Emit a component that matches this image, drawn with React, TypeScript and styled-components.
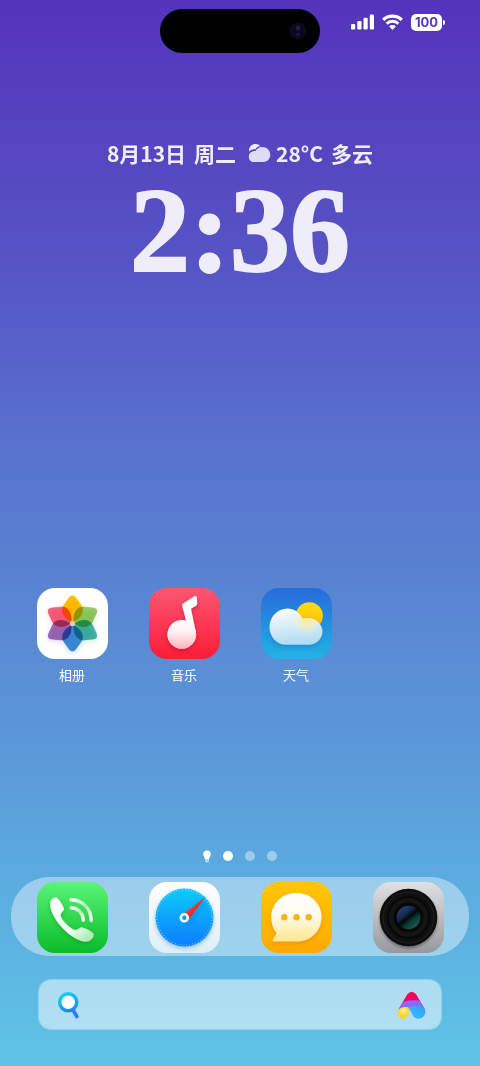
import React from "react";
import styled, { createGlobalStyle } from "styled-components";

const GlobalStyle = createGlobalStyle`
  * { box-sizing: border-box; }
  body {
    margin: 0;
    font-family: "Noto Sans", "Noto Sans CJK SC", sans-serif;
    color: #fff;
  }
`;

const Screen = styled.main`
  min-height: 100vh;
  display: flex;
  flex-direction: column;
  background: linear-gradient(
    180deg,
    #5433bb 0%,
    #5646c0 14%,
    #5659c7 28%,
    #5872ce 42%,
    #5985d2 56%,
    #5b98d9 70%,
    #5ba9df 81%,
    #5fc4e6 100%
  );
`;

const StatusBar = styled.header`
  display: grid;
  grid-template-columns: 1fr 160px 1fr;
  padding-top: 9px;
`;

const Island = styled.div`
  grid-column: 2;
  height: 44px;
  border-radius: 22px;
  background: #000;
  display: flex;
  align-items: center;
  justify-content: flex-end;
  padding-right: 13px;
`;

const StatusIcons = styled.div`
  display: flex;
  align-items: center;
  justify-content: flex-end;
  gap: 8px;
  height: 18px;
  margin-top: 4px;
  padding-right: 35px;
`;

const Battery = styled.div`
  display: flex;
  align-items: center;
  gap: 1px;
`;

const BatteryLevel = styled.span`
  width: 31px;
  height: 17px;
  border-radius: 5px;
  background: #fff;
  color: #5535b8;
  font: 700 13px/17px Inter, sans-serif;
  text-align: center;
`;

const BatteryCap = styled.span`
  width: 2px;
  height: 5px;
  border-radius: 0 2px 2px 0;
  background: #fff;
`;

const ClockWidget = styled.section`
  display: flex;
  flex-direction: column;
  align-items: center;
  margin-top: 84px;
  color: #efedf9;
`;

const DateLine = styled.div`
  display: flex;
  align-items: center;
  gap: 12px;
  font: 700 21px/32px "Noto Sans CJK SC", sans-serif;
`;

const DateGroup = styled.div`
  display: flex;
  gap: 8px;
`;

const WeatherGroup = styled.div`
  display: flex;
  align-items: center;
  gap: 5px;
`;

const Time = styled.time`
  margin-top: 14px;
  font: 700 120px/96px "Liberation Serif", serif;
  -webkit-text-stroke: 2px #efedf9;
`;

const Apps = styled.nav`
  display: grid;
  grid-template-columns: repeat(4, 1fr);
  margin-top: auto;
  padding: 0 16px;
`;

const AppLink = styled.a`
  display: flex;
  flex-direction: column;
  align-items: center;
  color: #fff;
  text-decoration: none;
`;

const Tile = styled.span<{ $fill: string }>`
  display: block;
  width: 71px;
  height: 71px;
  border-radius: 18px;
  overflow: hidden;
  background: ${(p) => p.$fill};

  svg { display: block; }
`;

const AppLabel = styled.span`
  margin-top: 6px;
  font: 400 13px/20px "Noto Sans CJK SC", sans-serif;
`;

const Pager = styled.div`
  display: flex;
  align-items: center;
  justify-content: center;
  gap: 12px;
  height: 14px;
  margin-top: 164px;
`;

const PageDot = styled.button<{ $active?: boolean }>`
  width: 10px;
  height: 10px;
  padding: 0;
  border: 0;
  border-radius: 50%;
  background: ${(p) => (p.$active ? "#fff" : "rgba(255, 255, 255, 0.4)")};
`;

const Dock = styled.nav`
  display: grid;
  grid-template-columns: repeat(4, 1fr);
  margin: 14px 11px 0;
  padding: 5px 5px 3px;
  border-radius: 38px;
  background: rgba(255, 255, 255, 0.4);
`;

const SearchBar = styled.form`
  display: flex;
  align-items: center;
  height: 51px;
  margin: 23px 38px 36px;
  padding: 0 15px 0 17px;
  border: 1px solid rgba(255, 255, 255, 0.3);
  border-radius: 13px;
  background: rgba(255, 255, 255, 0.5);
  background-clip: padding-box;
`;

const SearchInput = styled.input`
  flex: 1;
  min-width: 0;
  border: 0;
  outline: 0;
  background: transparent;
  font: 400 16px/24px "Noto Sans CJK SC", sans-serif;
`;

const IconButton = styled.button`
  display: flex;
  padding: 0;
  border: 0;
  background: transparent;
`;

const CameraSensor = () => (
  <svg width="18" height="18" viewBox="0 0 18 18" aria-hidden="true">
    <circle cx="9" cy="9" r="8.5" fill="#0a0a1c" />
    <circle cx="9" cy="9" r="6" fill="#080822" />
    <circle cx="9" cy="6" r="2.4" fill="#1f1f42" />
    <circle cx="9" cy="12.5" r="2" fill="#19193c" />
  </svg>
);

const SignalIcon = () => (
  <svg width="23" height="16" viewBox="0 0 23 16" fill="#fff" aria-hidden="true">
    <rect x="0" y="10" width="4.2" height="5.5" rx="1.3" />
    <rect x="6.3" y="7" width="4.2" height="8.5" rx="1.3" />
    <rect x="12.5" y="3.8" width="4.2" height="11.7" rx="1.3" />
    <rect x="18.8" y="0.6" width="4.2" height="14.9" rx="1.3" />
  </svg>
);

const WifiIcon = () => (
  <svg width="21" height="16" viewBox="0 0 21 16" aria-hidden="true">
    <path d="M1.2 5.8C6.4.9 14.6.9 19.8 5.8" fill="none" stroke="#fff" strokeWidth="3.2" />
    <path d="M4.6 9.6C8 6.5 13 6.5 16.4 9.6" fill="none" stroke="#fff" strokeWidth="2.9" />
    <path d="M7.2 12.4C9 10.6 12 10.6 13.8 12.4L10.5 15.9Z" fill="#fff" />
  </svg>
);

const CloudyIcon = () => (
  <svg width="23" height="20" viewBox="0 0 23 20" aria-hidden="true">
    <path
      d="M1.2 8.5C.3 4.5 3.5 1 7.5 1c2 0 3.6.8 4.8 2-2.200.3-4 1.500-5 3.400-2.300-.3-4.600.4-6.100 2.100Z"
      fill="#efedf9"
    />
    <path
      d="M6 19C2.800 19 .8 16.700.8 13.700.8 10.300 3.600 7.900 7.400 8.100 8.600 5.500 11 3.900 14 3.900c4.800 0 8.300 3.500 8.300 7.700 0 4.200-2.900 7.400-6.800 7.400Z"
      fill="#dedcf4"
    />
  </svg>
);

const PETALS = ["#fdc400", "#9dce6c", "#4ab9ab", "#4798db", "#a374bf", "#f66a84"];

const GalleryIcon = () => (
  <svg width="71" height="71" viewBox="0 0 71 71" aria-hidden="true">
    <defs>
      <filter id="petalShade" x="-30%" y="-30%" width="160%" height="160%">
        <feGaussianBlur stdDeviation="2.5" />
      </filter>
      <path
        id="petal"
        d="M0-28C1.5-28 2.6-27 4-25.200L8.800-18.500C12.800-12.500 8.500-4.500 0-1.500C-8.500-4.500-12.800-12.500-8.800-18.500L-4-25.200C-2.600-27-1.500-28 0-28Z"
      />
    </defs>
    <g transform="translate(35.5 37)" opacity="0.3" filter="url(#petalShade)">
      {PETALS.map((c, i) => (
        <use key={c} href="#petal" fill={c} transform={`rotate(${i * 60})`} />
      ))}
    </g>
    <g transform="translate(35.5 35.5)">
      {PETALS.map((c, i) => (
        <use
          key={c}
          href="#petal"
          fill={c}
          transform={`rotate(${i * 60})`}
          style={{ mixBlendMode: "multiply" }}
        />
      ))}
    </g>
    <circle cx="35.5" cy="35.5" r="2.6" fill="#d9cfc6" />
  </svg>
);

const MusicIcon = () => (
  <svg width="71" height="71" viewBox="0 0 71 71" aria-hidden="true">
    <defs>
      <linearGradient id="headFill" x1="0" y1="0" x2="0" y2="1">
        <stop offset="0" stopColor="#fff" />
        <stop offset="0.4" stopColor="#fff1f3" />
        <stop offset="1" stopColor="#ffb3bc" />
      </linearGradient>
      <filter id="noteShade" x="-30%" y="-20%" width="160%" height="150%">
        <feDropShadow dx="0" dy="2" stdDeviation="2" floodColor="#a40020" floodOpacity="0.45" />
      </filter>
    </defs>
    <g filter="url(#noteShade)">
      <circle cx="32.8" cy="46.5" r="14.3" fill="url(#headFill)" />
      <path
        d="M34 15.500 45.500 8.300Q47.700 7.200 47.900 9.500L48.200 15.600Q48.200 17 47 17.700L42 20.800 47 45 39 40 33.200 18Q32.800 16.300 34 15.500Z"
        fill="#fff"
      />
    </g>
    <circle cx="32.8" cy="46.5" r="14.3" fill="url(#headFill)" />
  </svg>
);

const WeatherIcon = () => (
  <svg width="71" height="71" viewBox="0 0 71 71" aria-hidden="true">
    <defs>
      <linearGradient id="sunFill" x1="0" y1="0" x2="0" y2="1">
        <stop offset="0" stopColor="#ffdc16" />
        <stop offset="1" stopColor="#fdbd00" />
      </linearGradient>
      <linearGradient id="cloudFill" x1="0" y1="0" x2="0.2" y2="1">
        <stop offset="0" stopColor="#fff" />
        <stop offset="1" stopColor="#b2dcf3" />
      </linearGradient>
      <radialGradient id="cloudGlow">
        <stop offset="0" stopColor="#ffe98f" />
        <stop offset="1" stopColor="#fff4c4" stopOpacity="0" />
      </radialGradient>
      <clipPath id="cloudClip">
        <path d="M25.5 56.8C15.700 56.800 8.500 49 8.500 39.300 8.500 28.800 16.500 20.500 26.500 20.500 33 20.500 38.500 24.300 41.500 30.800 51.500 27.500 61.500 34.500 61.500 43.500 61.500 51 55 56.800 48 56.800Z" />
      </clipPath>
      <filter id="cloudShade" x="-30%" y="-30%" width="160%" height="170%">
        <feGaussianBlur stdDeviation="2.5" />
      </filter>
    </defs>
    <circle cx="48.3" cy="27.8" r="13.6" fill="url(#sunFill)" />
    <rect x="10" y="32" width="50" height="27" rx="13" fill="#1266b6" opacity="0.35" filter="url(#cloudShade)" />
    <g clipPath="url(#cloudClip)">
      <rect x="8" y="20" width="54" height="38" fill="url(#cloudFill)" />
      <circle cx="46" cy="32" r="15" fill="url(#cloudGlow)" />
    </g>
  </svg>
);

const PhoneIcon = () => (
  <svg width="71" height="71" viewBox="0 0 71 71" aria-hidden="true">
    <defs>
      <linearGradient id="handset" x1="0" y1="0" x2="1" y2="1">
        <stop offset="0" stopColor="#fff" />
        <stop offset="0.6" stopColor="#f2fdf3" />
        <stop offset="1" stopColor="#98e6a2" />
      </linearGradient>
      <linearGradient id="wave" x1="0" y1="0" x2="0.8" y2="1">
        <stop offset="0" stopColor="#fff" />
        <stop offset="0.55" stopColor="#a9efb0" />
        <stop offset="1" stopColor="#f4fff5" />
      </linearGradient>
      <filter id="handsetShade" x="-20%" y="-20%" width="150%" height="150%">
        <feDropShadow dx="0" dy="2" stdDeviation="2" floodColor="#00801c" floodOpacity="0.4" />
      </filter>
    </defs>
    <path
      filter="url(#handsetShade)"
      fill="url(#handset)"
      d="M13.2 20.5C13.500 17.300 17.700 15 19.800 15.700 21.700 16.500 26.700 24.500 27 26.500 27.300 28.500 23.800 30.800 23.500 33 23.600 37.500 33.500 47 38 48 40.500 48.500 42.500 45 45 45.300 48 45.900 55.700 50 56.700 52 57.700 54.500 54 59 50.500 59.600 44 60.600 34 55 25.500 46 17.500 37.500 12.500 27.500 13.200 20.500Z"
    />
    <g fill="none" stroke="url(#wave)" strokeWidth="3.4" strokeLinecap="round">
      <path d="M34 17.700C46 18 54 27 54.200 38.300" />
      <path d="M34.300 25.800C41.500 26.500 46.200 31.500 46.300 38.300" />
    </g>
  </svg>
);

const BrowserIcon = () => (
  <svg width="71" height="71" viewBox="0 0 71 71" aria-hidden="true">
    <defs>
      <linearGradient id="dial" x1="0" y1="0" x2="0" y2="1">
        <stop offset="0" stopColor="#07cbfa" />
        <stop offset="1" stopColor="#087cff" />
      </linearGradient>
      <filter id="dialShade" x="-20%" y="-20%" width="140%" height="150%">
        <feDropShadow dx="0" dy="2" stdDeviation="2" floodColor="#2878b8" floodOpacity="0.4" />
      </filter>
    </defs>
    <circle cx="35.5" cy="35.5" r="29" fill="url(#dial)" filter="url(#dialShade)" />
    <circle
      cx="35.5"
      cy="35.5"
      r="27.6"
      fill="none"
      stroke="#a9e8ff"
      strokeOpacity="0.65"
      strokeWidth="1.7"
      strokeDasharray="0.7 2.2"
    />
    <path d="M31 39 41 45 57 21 52 18Z" fill="#0568d8" opacity="0.18" filter="url(#dialShade)" />
    <path d="M56 15 39 38.500 33 33Z" fill="#f4382f" />
    <path d="M56 15 39 38.500 36 35.700Z" fill="#df302b" />
    <circle cx="35.3" cy="35.8" r="3.5" fill="#0a9aff" stroke="#fff" strokeWidth="2.6" />
  </svg>
);

const MessagesIcon = () => (
  <svg width="71" height="71" viewBox="0 0 71 71" aria-hidden="true">
    <defs>
      <linearGradient id="bubble" x1="0" y1="0" x2="0" y2="1">
        <stop offset="0" stopColor="#fff" />
        <stop offset="0.45" stopColor="#fffbed" />
        <stop offset="1" stopColor="#ffe58d" />
      </linearGradient>
      <filter id="bubbleShade" x="-20%" y="-20%" width="140%" height="150%">
        <feDropShadow dx="0" dy="2" stdDeviation="2" floodColor="#c77400" floodOpacity="0.4" />
      </filter>
    </defs>
    <path
      filter="url(#bubbleShade)"
      fill="url(#bubble)"
      d="M35.5 11C49.800 11 60.500 21.500 60.500 35 60.500 49 50 59.500 35.500 59.500H13.500C11.700 59.500 11.300 58.300 12.300 57L15.500 51.500C12 46.500 10.300 41 10.300 35.500 10.300 21.500 21 11 35.500 11Z"
    />
    <g fill="#f9b21a">
      <circle cx="23.3" cy="35.2" r="3.2" />
      <circle cx="35.5" cy="35.2" r="3.2" />
      <circle cx="47.7" cy="35.2" r="3.2" />
    </g>
  </svg>
);

const CameraIcon = () => (
  <svg width="71" height="71" viewBox="0 0 71 71" aria-hidden="true">
    <defs>
      <linearGradient id="lensGlass" x1="0.1" y1="0" x2="0.9" y2="1">
        <stop offset="0" stopColor="#294a86" />
        <stop offset="0.36" stopColor="#14284c" />
        <stop offset="0.5" stopColor="#020708" />
        <stop offset="0.65" stopColor="#0c3a32" />
        <stop offset="1" stopColor="#23665b" />
      </linearGradient>
      <filter id="lensShade" x="-20%" y="-20%" width="140%" height="150%">
        <feDropShadow dx="0" dy="2" stdDeviation="1.5" floodColor="#000" floodOpacity="0.35" />
      </filter>
    </defs>
    <circle cx="35.5" cy="35.5" r="28.8" fill="#090909" filter="url(#lensShade)" />
    <circle cx="35.5" cy="35.5" r="25.5" fill="#101010" stroke="#2a2a2a" strokeWidth="0.8" />
    <circle cx="35.5" cy="35.5" r="20.5" fill="#141414" stroke="#070707" strokeWidth="2" />
    <circle cx="35.5" cy="35.5" r="15" fill="#060708" />
    <circle cx="35.5" cy="35.5" r="11.8" fill="url(#lensGlass)" />
  </svg>
);

const BulbIcon = () => (
  <svg width="8" height="13" viewBox="0 0 8 13" aria-hidden="true">
    <path d="M4 .4C6.2.4 7.800 2 7.800 4.100 7.800 6.200 6.400 7 6.100 9H1.900C1.600 7 .2 6.200.2 4.100.2 2 1.800.4 4 .4Z" fill="#fff" />
    <path d="M2 9H6V11Q6 12.500 4 12.500T2 11Z" fill="#fff" opacity="0.55" />
  </svg>
);

const SearchIcon = () => (
  <svg width="24" height="30" viewBox="0 0 24 30" aria-hidden="true">
    <defs>
      <linearGradient id="ring" x1="0.3" y1="0" x2="0.7" y2="1">
        <stop offset="0" stopColor="#02d5f7" />
        <stop offset="1" stopColor="#1c86ff" />
      </linearGradient>
    </defs>
    <path d="M17 20 20.800 26.500" stroke="#2b7cf6" strokeWidth="3.6" strokeLinecap="round" />
    <circle cx="12.2" cy="12.2" r="8.5" fill="#fff" stroke="url(#ring)" strokeWidth="3.4" />
  </svg>
);

const AssistantIcon = () => (
  <svg width="30" height="30" viewBox="0 0 30 30" aria-hidden="true">
    <defs>
      <radialGradient id="goldBall" cx="0.5" cy="0.3" r="0.7">
        <stop offset="0" stopColor="#fff0a0" />
        <stop offset="0.5" stopColor="#fcdc35" />
        <stop offset="1" stopColor="#f9d01c" />
      </radialGradient>
      <linearGradient id="blueBall" x1="1" y1="0" x2="0" y2="1">
        <stop offset="0" stopColor="#2d9bfa" />
        <stop offset="1" stopColor="#3cc2fb" />
      </linearGradient>
      <clipPath id="assistantArch">
        <path d="M2.5 19.5 11.300 4.200Q15.700-.8 20.100 4.200L29 19.500 18 22 15.500 19 12 20Z" />
      </clipPath>
    </defs>
    <g clipPath="url(#assistantArch)">
      <rect width="30" height="30" fill="#f3055f" />
      <path d="M0 17.500Q8 7.500 28 11.500V30H0Z" fill="#8e68f4" />
    </g>
    <path
      d="M7.300 17.300C9.800 16.800 12.600 17.300 13.300 18.500 13.900 19.800 12.800 21.800 12.400 24 11.700 27 9.800 28.500 7.300 28.500 4 28.500 1.500 26 1.500 23 1.500 20 4 17.800 7.300 17.300Z"
      fill="url(#goldBall)"
    />
    <path
      d="M13.300 17.500C15 16 19 16.300 23 15.500 26.500 15.500 29.300 18.500 29.300 22 29.300 25.800 26.300 28.800 22.500 28.800 19.500 28.800 17.500 27 16.500 25 15.600 22.500 14.800 20.500 13.300 19.500 12.600 18.800 12.700 18 13.300 17.500Z"
      fill="url(#blueBall)"
    />
  </svg>
);

const APPS = [
  { name: "相册", fill: "#fff", icon: <GalleryIcon /> },
  { name: "音乐", fill: "linear-gradient(#fd5671, #fb1c39)", icon: <MusicIcon /> },
  { name: "天气", fill: "linear-gradient(#266bda, #22b3e4)", icon: <WeatherIcon /> },
];

const DOCK_APPS = [
  { name: "电话", fill: "linear-gradient(#5af576, #0bbb2a)", icon: <PhoneIcon /> },
  { name: "浏览器", fill: "linear-gradient(#fff, #dfeff7)", icon: <BrowserIcon /> },
  { name: "短信", fill: "linear-gradient(#ffc702, #ffa902)", icon: <MessagesIcon /> },
  { name: "相机", fill: "linear-gradient(#dfe0e2, #98999b)", icon: <CameraIcon /> },
];

export default function App() {
  return (
    <>
      <GlobalStyle />
      <Screen>
        <StatusBar>
          <Island>
            <CameraSensor />
          </Island>
          <StatusIcons>
            <SignalIcon />
            <WifiIcon />
            <Battery>
              <BatteryLevel>100</BatteryLevel>
              <BatteryCap />
            </Battery>
          </StatusIcons>
        </StatusBar>

        <ClockWidget>
          <DateLine>
            <DateGroup>
              <span>8月13日</span>
              <span>周二</span>
            </DateGroup>
            <WeatherGroup>
              <CloudyIcon />
              <DateGroup>
                <span>28°C</span>
                <span>多云</span>
              </DateGroup>
            </WeatherGroup>
          </DateLine>
          <Time dateTime="14:36">2:36</Time>
        </ClockWidget>

        <Apps>
          {APPS.map((app) => (
            <AppLink key={app.name} href="#">
              <Tile $fill={app.fill}>{app.icon}</Tile>
              <AppLabel>{app.name}</AppLabel>
            </AppLink>
          ))}
        </Apps>

        <Pager>
          <BulbIcon />
          <PageDot type="button" $active aria-label="1" />
          <PageDot type="button" aria-label="2" />
          <PageDot type="button" aria-label="3" />
        </Pager>

        <Dock>
          {DOCK_APPS.map((app) => (
            <AppLink key={app.name} href="#" aria-label={app.name}>
              <Tile $fill={app.fill}>{app.icon}</Tile>
            </AppLink>
          ))}
        </Dock>

        <SearchBar>
          <IconButton type="submit" aria-label="搜索">
            <SearchIcon />
          </IconButton>
          <SearchInput type="text" aria-label="搜索" />
          <IconButton type="button" aria-label="小爱同学">
            <AssistantIcon />
          </IconButton>
        </SearchBar>
      </Screen>
    </>
  );
}
